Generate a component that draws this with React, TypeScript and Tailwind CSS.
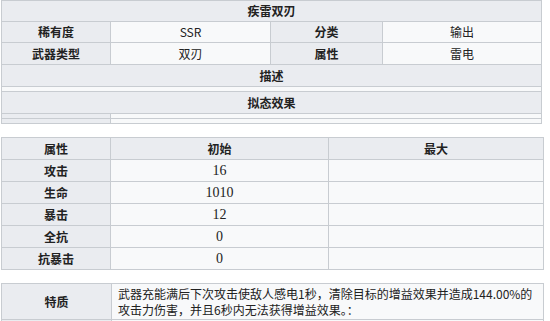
const cjk = "font-['Noto_Sans_CJK_SC','Noto_Sans',sans-serif]";

const stats = [
  { name: "攻击", base: "16" },
  { name: "生命", base: "1010" },
  { name: "暴击", base: "12" },
  { name: "全抗", base: "0" },
  { name: "抗暴击", base: "0" },
];

// header cell / data cell
const th = "border border-[#c8ccd1] bg-[#eaecf0] p-0 text-center font-bold";
const td = "border border-[#c8ccd1] bg-[#f8f9fa] p-0 text-center font-normal";

function InfoTable() {
  return (
    <table className="w-[541px] table-fixed border-collapse">
      <colgroup>
        <col className="w-[109px]" />
        <col className="w-[160px]" />
        <col className="w-[112px]" />
        <col />
      </colgroup>
      <tbody>
        <tr className="h-[21px]">
          <th colSpan={4} className={th}>疾雷双刃</th>
        </tr>
        <tr className="h-[21px]">
          <th className={th}>稀有度</th>
          <td className={td}>SSR</td>
          <th className={th}>分类</th>
          <td className={td}>输出</td>
        </tr>
        <tr className="h-[22px]">
          <th className={th}>武器类型</th>
          <td className={td}>双刃</td>
          <th className={th}>属性</th>
          <td className={td}>雷电</td>
        </tr>
        <tr className="h-[22px]">
          <th colSpan={4} className={th}>描述</th>
        </tr>
        <tr className="h-[5px]">
          <td colSpan={4} className={td}></td>
        </tr>
        <tr className="h-[22px]">
          <th colSpan={4} className={th}>拟态效果</th>
        </tr>
        <tr className="h-[5px]">
          <th className={th}></th>
          <td colSpan={3} className={td}></td>
        </tr>
        <tr className="h-[5px]">
          <th className={th}></th>
          <td colSpan={3} className={td}></td>
        </tr>
      </tbody>
    </table>
  );
}

function StatTable() {
  return (
    <table className="mt-[13px] w-[543px] table-fixed border-collapse">
      <colgroup>
        <col className="w-[109px]" />
        <col className="w-[218px]" />
        <col />
      </colgroup>
      <tbody>
        <tr className="h-[22px]">
          <th className={th}>属性</th>
          <th className={th}>初始</th>
          <th className={th}>最大</th>
        </tr>
        {stats.map((s) => (
          <tr key={s.name} className="h-[22px]">
            <th className={th}>{s.name}</th>
            <td className={`${td} font-['Liberation_Serif',serif] text-[14px]`}>{s.base}</td>
            <td className={td}></td>
          </tr>
        ))}
      </tbody>
    </table>
  );
}

function TraitTable() {
  return (
    <table className="mt-[13px] w-[543px] table-fixed border-collapse">
      <colgroup>
        <col className="w-[110px]" />
        <col />
      </colgroup>
      <tbody>
        <tr className="h-[36px]">
          <th className={th}>特质</th>
          <td className={`${td} px-[6px] text-left leading-[16px]`}>
            武器充能满后下次攻击使敌人感电1秒，清除目标的增益效果并造成144.00%的
            <br />
            攻击力伤害，并且6秒内无法获得增益效果。：
          </td>
        </tr>
        <tr className="h-[22px]">
          <th className={th}></th>
          <td className={td}></td>
        </tr>
      </tbody>
    </table>
  );
}

export default function App() {
  return (
    <div className={`h-[321px] w-[550px] overflow-hidden bg-white pl-px text-[12px] text-[#222] ${cjk}`}>
      <InfoTable />
      <StatTable />
      <TraitTable />
    </div>
  );
}
